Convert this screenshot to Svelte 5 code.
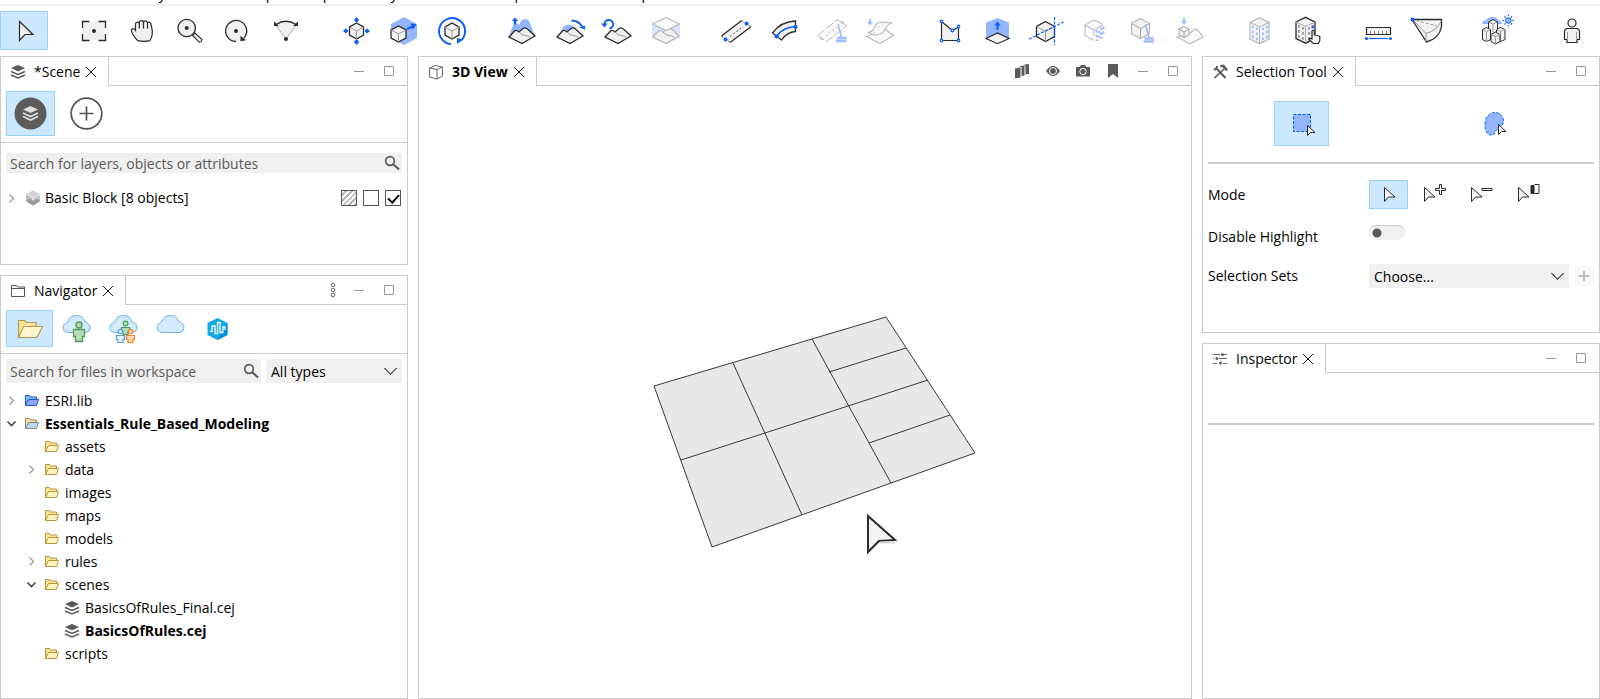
<script lang="ts">
	type Tool = { name: string; icon: string; disabled?: boolean };

	const INK = '#2b2b2b';
	const BLUE = '#0a5cff';
	const SKY = '#93b6ff';

	// isometric cube around a centre, w and h are half sizes
	function cube(x: number, y: number, w: number, h: number, stroke = INK) {
		const q = h / 2;
		return `<path d="M${x} ${y - h}l${w} ${q}v${h}l${-w} ${q}l${-w} ${-q}v${-h}z" fill="#f2f2f2" stroke="${stroke}" stroke-width="1.3"/>
			<path d="M${x - w} ${y - q}l${w} ${q}l${w} ${-q}M${x} ${y}v${h}" fill="none" stroke="#999"/>`;
	}

	function terrain(stroke = INK) {
		return `<path d="M3 22l5.500-6q1.500-1.500 4.500 1l4-3.500q2.500-1.500 5 1l7 6.500-13 7.500z" fill="#f0f0f0" stroke="${stroke}" stroke-width="1.3"/>
			<path d="M13 17q3 3.500 6 3.500t5.500 2" fill="none" stroke="#999"/>`;
	}

	function broom(x: number, y: number) {
		return `<path d="M${x} ${y}l3.500 13" stroke="${SKY}" stroke-width="1.600"/><path d="M${x - 1} ${y + 14}h9.500M${x - 2} ${y + 17}h10.500" stroke="${SKY}" stroke-width="2.600"/>`;
	}

	function windows(x: number, y: number, fill: string) {
		let out = '';
		for (let row = 0; row < 3; row++) {
			for (const [dx, dy] of [[2, 2], [6, 4], [12, 4], [16, 2]]) {
				out += `<path d="M${x + dx} ${y + dy + row * 5}h1.800v2.800h-1.800z" fill="${fill}"/>`;
			}
		}
		return out;
	}

	function building(x: number, y: number, stroke: string, fill: string) {
		return `<path d="M${x} ${y}l9.500-4.700 9.500 4.700v16.500l-9.500 4.700-9.500-4.700z" fill="#f2f2f2" stroke="${stroke}" stroke-width="1.3"/>
			<path d="M${x} ${y}l9.500 4.300 9.500-4.300M${x + 9.5} ${y + 4.3}v16" fill="none" stroke="#aaa"/>${windows(x, y + 1, fill)}`;
	}

	const arrow = `fill="#f2f2f2" stroke="${INK}" stroke-width="1.2"`;

	const toolGroups: Tool[][] = [
		[
			{ name: 'Select', icon: `<path d="M11.500 6.500v19l5.500-6h8z" ${arrow}/>` }
		],
		[
			{
				name: 'Frame',
				icon: `<path d="M5 7h22v18H5z" fill="#f0f0f0"/><path d="M4.500 13V6.500h7M20.500 6.500h7V13M27.500 19v6.500h-7M11.500 25.500h-7V19" fill="none" stroke="${INK}" stroke-width="1.3"/><circle cx="16" cy="16" r="2" fill="${INK}"/>`
			},
			{
				name: 'Pan',
				icon: `<path d="M9.500 15.500V8.500q1.800-2.500 3.800-.5v-1q2-2.500 4.200-.500q2.300-1.500 4 1q2-1 3.300 1l1 4.500q.900 3 .400 6.500-.700 4.500-2.500 6.200-6 1.300-11.700 0-2.500-1.700-5-6.200-2.500-4-1-5.500 1.500-1 3.500 1.500z" fill="#f0f0f0" stroke="${INK}" stroke-width="1.2"/><path d="M13.300 8v5.500M17.500 7v6.500M21.500 8v5.500" stroke="${INK}" stroke-width="1.2"/>`
			},
			{
				name: 'Zoom',
				icon: `<path d="M18.500 20.500l2.500-2.500 7 6.500q-.500 2.500-2.500 2.800z" fill="#f0f0f0" stroke="${INK}" stroke-width="1.1"/><circle cx="12.700" cy="13" r="8.700" fill="#f0f0f0" stroke="${INK}" stroke-width="1.3"/><circle cx="12.700" cy="13" r="2" fill="${INK}"/>`
			},
			{
				name: 'Orbit',
				icon: `<circle cx="14" cy="16" r="10" fill="#f0f0f0"/><path d="M14 26.500A10.500 10.500 0 1 1 22 23" fill="none" stroke="${INK}" stroke-width="1.3"/><path d="M18.500 26.300v-5.500l5.500 4.500z" fill="${INK}"/><circle cx="14" cy="16" r="2" fill="${INK}"/>`
			},
			{
				name: 'Look around',
				icon: `<path d="M16 24L5.500 10q10.500-6.500 21 0z" fill="#f0f0f0"/><path d="M16 24L5.500 10M16 24l10.500-14" stroke="#aaa"/><path d="M6 9.500q10-6.500 20 0" fill="none" stroke="${INK}" stroke-width="1.3"/><path d="M4 6.500v4.500h5zM28 6.500v4.500h-5z" fill="${INK}"/><circle cx="16" cy="24" r="2" fill="${INK}"/>`
			}
		],
		[
			{
				name: 'Move',
				icon: `${cube(16.5, 16, 7, 8)}<path d="M16.500 2l3 3.500h-1.700v1.500h-2.600V5.500h-1.700zM16.500 30l3-3.500h-1.700V25h-2.600v1.500h-1.700zM3 16l3.500-3v1.700H8v2.600H6.500V19zM30 16l-3.500-3v1.700H25v2.600h1.500V19z" fill="${BLUE}"/>`
			},
			{
				name: 'Scale',
				icon: `<path d="M3 9l13-7 13 7v14l-13 7-13-7z" fill="${SKY}"/>${cube(10.500, 19, 7.500, 8)}<path d="M19 14l6-2.500" stroke="${BLUE}" stroke-width="2"/><path d="M22.500 8.500l6 .500-3.500 5.500z" fill="${BLUE}"/>`
			},
			{
				name: 'Rotate',
				icon: `<path d="M15 29A13 13 0 1 1 25 25.500" fill="none" stroke="${BLUE}" stroke-width="1.900"/><path d="M21 23v6l6-4.500z" fill="${BLUE}"/>${cube(16, 16, 7, 8)}`
			}
		],
		[
			{
				name: 'Raise terrain',
				icon: `<path d="M3 22l4-12q3-3 6 0 2-6 6-6 3.500 0 5 4l5 13z" fill="${SKY}"/>${terrain()}<path d="M9 2.500l3 3.500h-1.800v3.500H7.800V6H6z" fill="${BLUE}"/>`
			},
			{
				name: 'Smooth terrain',
				icon: `<path d="M5 20l4-8q6-4.500 12 0l4 7z" fill="${SKY}"/>${terrain()}<path d="M17.500 5.500q7 0 10.500 6" fill="none" stroke="${BLUE}" stroke-width="1.900"/><path d="M25 12.500l6-2v4z" fill="${BLUE}"/>`
			},
			{
				name: 'Reset terrain',
				icon: `${terrain()}<path d="M2.500 9.500a4.300 4.300 0 1 1 5 4" fill="none" stroke="${BLUE}" stroke-width="1.900"/><path d="M-1 8.500h6.500l-3 4z" fill="${BLUE}"/>`
			},
			{
				name: 'Align terrain',
				disabled: true,
				icon: `<path d="M2 8h28v15l-14 6-14-6z" fill="#d3e1ff"/>${terrain('#b5b5b5')}<path d="M16 2.500L29.500 9 16 15.500 2.500 9z" fill="#fafafa" stroke="#b5b5b5" stroke-width="1.2"/>`
			}
		],
		[
			{
				name: 'Polygonal street',
				icon: `<path d="M1.500 21L21.700 5.500l9.300 6.200L10 27.500z" fill="#f2f2f2"/><path d="M1.500 21L21.700 5.500M10 27.500L31 11.700" stroke="${INK}" stroke-width="1.3"/><path d="M1.500 21l8.500 6.500M21.700 5.500l9.300 6.200M10 21.500L23 11.500" stroke="#555" stroke-dasharray="2 2"/><circle cx="26.500" cy="8.500" r="2" fill="${BLUE}"/><circle cx="5.500" cy="24.500" r="2" fill="${BLUE}"/>`
			},
			{
				name: 'Freehand street',
				icon: `<path d="M4.500 18Q13 6.500 27.500 6v10.500Q19 17 13.500 25z" fill="#f2f2f2" stroke="${INK}" stroke-width="1.3"/><path d="M8.500 21.500Q15 12 27.500 11.800" fill="none" stroke="${BLUE}" stroke-width="1.600"/><circle cx="8.500" cy="21.500" r="2" fill="${BLUE}"/><circle cx="27.500" cy="11.800" r="2" fill="${BLUE}"/>`
			},
			{
				name: 'Clean up streets',
				disabled: true,
				icon: `<path d="M1.500 20.500L21.500 4.500l9.500 6.500L10.500 26.500z" fill="#fafafa" stroke="#b5b5b5" stroke-dasharray="9 2"/><path d="M10 20.500L22 11" stroke="#bbb" stroke-dasharray="2 2"/><circle cx="5.500" cy="23.500" r="1.800" fill="#ccc"/><circle cx="26.500" cy="7.500" r="1.800" fill="#ccc"/>${broom(22, 9)}`
			},
			{
				name: 'Align streets',
				disabled: true,
				icon: `<path d="M2.500 21.500l13.500 7 13.500-8-8-6z" fill="#fafafa" stroke="#b5b5b5" stroke-width="1.2"/><path d="M3.500 17.500q6 0 8.500-8 4-4 15.500-1.500-5 2-7 7-3 5-10 5z" fill="#fafafa" stroke="#b5b5b5" stroke-width="1.2"/><path d="M9 17.500q4-1 6-5 1.500-3 6-4" fill="none" stroke="#bbb" stroke-dasharray="2 2"/><path d="M6 10.500L9 7H7V4H5v3H3z" fill="${SKY}"/>`
			}
		],
		[
			{
				name: 'Polygonal shape',
				icon: `<path d="M7.500 6.500l11 9 6-3.500v13.500h-17z" fill="#f0f0f0" stroke="${INK}" stroke-width="1.2"/>${[[7.5, 6.5], [18.5, 15.5], [24.5, 11.5], [24.5, 25.5], [7.5, 25.5]]
					.map(([x, y]) => `<circle cx="${x}" cy="${y}" r="1.300" fill="#fff" stroke="${BLUE}" stroke-width="1.2"/>`)
					.join('')}`
			},
			{
				name: 'Push pull',
				icon: `<path d="M4 7.500L15.500 3 27 7.500v16H4z" fill="${SKY}"/><path d="M4 23.500L15.500 18 27 23.500l-11.500 5.200z" fill="#f2f2f2" stroke="${INK}" stroke-width="1.2"/><path d="M15.500 6.500l3.200 4h-2.200V15h-2v-4.500h-2.200z" fill="${BLUE}"/>`
			},
			{
				name: 'Separate faces',
				icon: `${cube(15.500, 16.500, 9, 10)}<path d="M24.500 2v28M-1 24L33.500 7" stroke="${BLUE}" stroke-width="1.2" stroke-dasharray="3 1.500"/>`
			},
			{
				name: 'Texture shape',
				disabled: true,
				icon: `<path d="M25 9.500L16 5 7 10v10.500l9 5M7 10l9 5 9-5M16 15v6" fill="none" stroke="#b9b9b9" stroke-width="1.2"/><path d="M19 15v11M23.500 12.500v11" stroke="${SKY}" stroke-width="2.400" stroke-dasharray="2.400 2.400"/><path d="M21.300 16v8M25.500 11.500v9" stroke="${SKY}" stroke-width="2" stroke-dasharray="2.400 2.400"/>`
			},
			{
				name: 'Clean up shapes',
				disabled: true,
				icon: `${cube(14.500, 13.500, 9, 10, '#b5b5b5')}${broom(19.500, 9.500)}`
			},
			{
				name: 'Align shapes',
				disabled: true,
				icon: `<path d="M3 22l13 6.700L29 22l-5.500-7q-2.500-2-5 1L13 20.500z" fill="#fafafa" stroke="#b5b5b5" stroke-width="1.2"/>${cube(10, 17, 5, 5.500, '#b5b5b5')}<path d="M10 9.500L13 6h-2V3H9v3H7z" fill="${SKY}"/>`
			}
		],
		[
			{ name: 'Generate', disabled: true, icon: building(6, 7.5, '#b5b5b5', SKY) },
			{
				name: 'Local edits',
				icon: `${building(4, 7, INK, '#999')}<path d="M19.500 10.500h2v3h-2z" fill="${BLUE}"/><path d="M20 24v-8q1.300-1.500 2.300 0v4q4 0 5.500 1.500v4l-1.500 3h-5L17 24.500q.500-2 3-.500z" fill="#f2f2f2" stroke="${INK}" stroke-width="1.2"/>`
			}
		],
		[
			{
				name: 'Measure distance',
				icon: `<path d="M4.500 12.500h24v7h-24z" fill="#f2f2f2" stroke="${INK}" stroke-width="1.2"/><path d="M8.500 19v-3M12.500 19v-3M16.500 19v-3M20.500 19v-3M24.500 19v-3" stroke="#888"/><path d="M7 23.500h19" stroke="${BLUE}" stroke-width="1.2"/><circle cx="4.500" cy="23.500" r="1.600" fill="${BLUE}"/><circle cx="28.500" cy="23.500" r="1.600" fill="${BLUE}"/>`
			},
			{
				name: 'Measure area',
				icon: `<path d="M2 4.500h29.500v7q-2 12-15 15.500z" fill="#f2f2f2" stroke="${INK}" stroke-width="1.3"/><path d="M4 6l12 12.500q11-3 15-12M16 18.500v8" fill="none" stroke="#999"/><path d="M6 5.500l21 5.500" stroke="#999" stroke-dasharray="3 2"/><circle cx="2.500" cy="4.500" r="2" fill="${BLUE}"/>`
			}
		],
		[
			{
				name: 'Scene light',
				icon: `<path d="M2 9q0-3.500 4-4 2-3 7-3 4 0 5 3 4 1 4 4z" fill="${SKY}"/><circle cx="28.300" cy="5.500" r="2.800" fill="${SKY}" stroke="${BLUE}"/><path d="M28.300-.500V1M28.300 10v1.500M22.500 5.500H24M32.500 5.500H34M24.500 1.500l1 1M32 1.500l-1 1M24.500 9.500l1-1M32 9.500l-1-1" stroke="${BLUE}" stroke-width="1.200"/>
					<path d="M8.500 7l4.500-2.500L17.500 7v14h-9z" fill="#f2f2f2" stroke="${INK}"/><path d="M8.500 7l4.500 2 4.500-2M13 9v8" stroke="#999"/>
					<path d="M2.500 14.500l4-2 4 2v10l-4 2-4-2zM16.500 14.500l4-2 4.500 2v10l-4.500 2-4-2z" fill="#f2f2f2" stroke="${INK}"/><path d="M2.500 14.500l4 2 4-2M6.500 16.500v9M16.500 14.500l4 2 4.500-2M20.500 16.500v9" stroke="#999"/>
					<path d="M11 19.500l4.500-2.500 4.500 2.500v7L15.500 29 11 26.500z" fill="#f2f2f2" stroke="${INK}"/><path d="M11 19.500l4.500 2 4.500-2M15.500 21.500V28" stroke="#999"/>`
			}
		],
		[
			{
				name: 'First person view',
				icon: `<circle cx="16" cy="8" r="4" fill="#f2f2f2" stroke="${INK}" stroke-width="1.2"/><path d="M10.500 13.500h11l2 2v9h-2.500v3H11v-3H8.500v-9z" fill="#f2f2f2" stroke="${INK}" stroke-width="1.2"/><path d="M11.500 17v8M20.500 17v8" stroke="#999"/>`
			}
		]
	];

	const menus = ['File', 'Edit', 'Select', 'Layer', 'View', 'Graph', 'Shapes', 'Analysis', 'Search', 'Scripts', 'Window', 'Help'];

	const tree = [
		{ label: 'ESRI.lib', level: 0, icon: 'lib', state: 'closed' },
		{ label: 'Essentials_Rule_Based_Modeling', level: 0, icon: 'project', state: 'open', bold: true },
		{ label: 'assets', level: 1, icon: 'folder' },
		{ label: 'data', level: 1, icon: 'folder', state: 'closed' },
		{ label: 'images', level: 1, icon: 'folder' },
		{ label: 'maps', level: 1, icon: 'folder' },
		{ label: 'models', level: 1, icon: 'folder' },
		{ label: 'rules', level: 1, icon: 'folder', state: 'closed' },
		{ label: 'scenes', level: 1, icon: 'folder', state: 'open' },
		{ label: 'BasicsOfRules_Final.cej', level: 2, icon: 'layers' },
		{ label: 'BasicsOfRules.cej', level: 2, icon: 'layers', bold: true },
		{ label: 'scripts', level: 1, icon: 'folder' }
	];

	// back, front, outline
	const folderColors: Record<string, string[]> = {
		lib: ['#6fc4f5', '#8fa8ff', '#2a4fd0'],
		project: ['#fbe39a', '#b4d8f8', '#8a8a70'],
		folder: ['#fbe39a', '#fff3c0', '#b8963e']
	};

	const cloud = 'M5.500 18.500q-4.500-1-4.500-5t4.500-5Q7.500 1.500 14.500 1.500q6.500 0 8 6 5.500 1.500 5.500 6.500 0 3.500-4 4.500z';

	const modes = [
		{ name: 'New selection', icon: '' },
		{ name: 'Add to selection', icon: '<path d="M18.500 3.500h2v4h4v2h-4v4h-2v-4h-4v-2h4z" fill="#fff" stroke="#2b2b2b"/>' },
		{ name: 'Remove from selection', icon: '<path d="M14 7.500h10v2H14z" fill="#fff" stroke="#2b2b2b"/>' },
		{ name: 'Toggle selection', icon: '<path d="M16 4.500v8h3v-8z" fill="#2b2b2b" stroke="#2b2b2b"/><path d="M19.500 3.500H24v9h-4.500" fill="none" stroke="#2b2b2b"/>' }
	];

	let mode = $state(0);
	let shape = $state('rectangle');
	let activeTool = $state('Select');
	let source = $state('Workspace');
</script>

{#snippet layers(color: string)}
	<svg width="16" height="16" viewBox="0 0 16 16" fill="none">
		<path d="M8 1l7 3-7 3.500L1 4z" fill={color} />
		<path d="M1 7.500l7 3 7-3M1 11l7 3 7-3" stroke={color} stroke-width="1.600" />
	</svg>
{/snippet}

{#snippet folder(kind: string)}
	<svg width="16" height="16" viewBox="0 0 16 16" stroke={folderColors[kind][2]}>
		<path d="M1.500 12.500v-10h4l1 1.500h6v3" fill={folderColors[kind][0]} />
		<path d="M1.500 12.500l3-6h10l-2 6z" fill={folderColors[kind][1]} />
	</svg>
{/snippet}

{#snippet chevron(state: string)}
	<svg width="9" height="9" viewBox="0 0 9 9" fill="none">
		{#if state === 'open'}
			<path d="M0.500 2.500l4 4 4-4" stroke="#444" stroke-width="1.600" />
		{:else}
			<path d="M2.500 0.500l4 4-4 4" stroke="#a0a0a0" stroke-width="1.400" />
		{/if}
	</svg>
{/snippet}

{#snippet magnifier()}
	<svg width="16" height="16" viewBox="0 0 16 16" fill="none" stroke="#5a5a5a">
		<circle cx="6" cy="6" r="4.300" stroke-width="1.700" />
		<path d="M9 9l6 5.500" stroke-width="2.200" />
	</svg>
{/snippet}

{#snippet closeButton(label: string)}
	<button class="close" aria-label={'Close ' + label}>
		<svg width="12" height="12" viewBox="0 0 12 12" stroke="#111"><path d="M1 1l10 10M11 1L1 11" /></svg>
	</button>
{/snippet}

{#snippet windowButtons()}
	<button aria-label="Minimize">
		<svg width="16" height="16" viewBox="0 0 16 16" stroke="#999"><path d="M3 8.500h10" /></svg>
	</button>
	<button aria-label="Maximize">
		<svg width="16" height="16" viewBox="0 0 16 16" stroke="#999" fill="none"><path d="M3.500 3.500h9v9h-9z" /></svg>
	</button>
{/snippet}

<div class="app">
	<nav class="menubar">
		{#each menus as menu}
			<span>{menu}</span>
		{/each}
	</nav>

	<div class="toolbar">
		{#each toolGroups as group}
			<div class="tool-group">
				{#each group as tool}
					<button
						class="tool"
						class:active={activeTool === tool.name}
						class:faded={tool.disabled}
						disabled={tool.disabled}
						aria-label={tool.name}
						onclick={() => (activeTool = tool.name)}
					>
						<svg width="32" height="31" viewBox="0 0 32 31" fill="none">{@html tool.icon}</svg>
					</button>
				{/each}
			</div>
		{/each}
	</div>

	<main class="workbench">
		<div class="column">
			<section class="panel scene">
				<header class="panel-header">
					<div class="tab">
						{@render layers('#5a5a5a')}
						<span>*Scene</span>
						{@render closeButton('Scene')}
					</div>
					<div class="header-tools">{@render windowButtons()}</div>
				</header>

				<div class="scene-actions">
					<button class="scene-button active" aria-label="Layers">
						<svg width="33" height="33" viewBox="0 0 33 33" fill="none">
							<circle cx="16.500" cy="16.500" r="16" fill="#5c5c5c" />
							<path d="M16.500 9l7.500 3.500-7.500 3.500L9 12.500z" fill="#e0e0e0" />
							<path d="M9 16l7.500 3.500L24 16M9 19.500l7.500 3.500 7.500-3.500" stroke="#e0e0e0" stroke-width="1.600" />
						</svg>
					</button>
					<button class="scene-button" aria-label="Add layer">
						<svg width="33" height="33" viewBox="0 0 33 33" fill="none" stroke="#555" stroke-width="1.700">
							<circle cx="16.500" cy="16.500" r="15.300" />
							<path d="M9.500 16.500h14M16.500 9.500v14" />
						</svg>
					</button>
				</div>

				<div class="scene-body">
					<div class="search">
						<input type="text" placeholder="Search for layers, objects or attributes" aria-label="Search layers" />
						{@render magnifier()}
					</div>
					<div class="layer-row">
						<span class="twisty">{@render chevron('closed')}</span>
						<svg width="16" height="16" viewBox="0 0 16 16">
							<path d="M8 0.500l7 3.500-7 3.500L1 4z" fill="#d4d4d4" />
							<path d="M1 4.500l6.500 3.500v7L1 11.500z" fill="#bcbcbc" />
							<path d="M15 4.500L8.500 8v7l6.500-3.500z" fill="#cacaca" />
							<path d="M1.500 10l3.500-1 3 2 3-2 3.500 1v1.500L8 15.500l-6.500-4z" fill="#999" />
						</svg>
						<span class="layer-name">Basic Block [8 objects]</span>
						<input type="checkbox" class="hatched" aria-label="Wireframe" />
						<input type="checkbox" aria-label="Lock layer" />
						<input type="checkbox" checked aria-label="Show layer" />
					</div>
				</div>
			</section>

			<section class="panel navigator">
				<header class="panel-header">
					<div class="tab">
						<svg width="16" height="16" viewBox="0 0 16 16" fill="none" stroke="#555">
							<path d="M1.500 13.500v-11h5l1 1.500h7v9.500zM1.500 5.500h13" />
						</svg>
						<span>Navigator</span>
						{@render closeButton('Navigator')}
					</div>
					<div class="header-tools">
						<button aria-label="View menu">
							<svg width="8" height="16" viewBox="0 0 8 16" fill="none" stroke="#666">
								<circle cx="4" cy="3" r="1.800" /><circle cx="4" cy="8" r="1.800" /><circle cx="4" cy="13" r="1.800" />
							</svg>
						</button>
						{@render windowButtons()}
					</div>
				</header>

				<div class="sources">
					<button class:active={source === 'Workspace'} aria-label="Workspace" onclick={() => (source = 'Workspace')}>
						<svg width="30" height="30" viewBox="0 0 30 30" stroke="#b39a4c" stroke-width="1.200">
							<path d="M3.500 23.500v-17h6l2 2h9.500v4" fill="#fbe39a" />
							<path d="M3.500 23.500l5-11h19l-5.500 11z" fill="#fff6cf" />
						</svg>
					</button>
					<button class:active={source === 'My content'} aria-label="My content" onclick={() => (source = 'My content')}>
						<svg width="30" height="30" viewBox="0 0 30 30">
							<path d={cloud} fill="#d2eafb" stroke="#6fb1e0" />
							<g fill="#b9dcb5" stroke="#4f9a5a" stroke-width="1.300">
								<circle cx="17" cy="11" r="3" />
								<path d="M11.500 15.500h11v7h-2v5h-7v-5h-2z" />
							</g>
						</svg>
					</button>
					<button class:active={source === 'Groups'} aria-label="Groups" onclick={() => (source = 'Groups')}>
						<svg width="30" height="30" viewBox="0 0 30 30">
							<path d={cloud} fill="#d2eafb" stroke="#6fb1e0" />
							<g stroke-width="1.200">
								<g fill="#b9dcb5" stroke="#4f9a5a">
									<circle cx="16.500" cy="9.500" r="2.300" /><path d="M12.500 13.500h8v4h-1.500v3h-5v-3h-1.500z" />
								</g>
								<g fill="#e4f3ff" stroke="#5b9fd8">
									<circle cx="11.500" cy="17.500" r="2.200" /><path d="M7.500 21.500h8v4H14v3H9v-3H7.500z" />
								</g>
								<g fill="#ffd9a8" stroke="#f0862f">
									<circle cx="21.500" cy="17.500" r="2.200" /><path d="M17.500 21.500h8v4H24v3h-5v-3h-1.500z" />
								</g>
							</g>
						</svg>
					</button>
					<button class:active={source === 'Online'} aria-label="Online" onclick={() => (source = 'Online')}>
						<svg width="30" height="30" viewBox="0 0 30 30"><path d={cloud} fill="#d2eafb" stroke="#6fb1e0" /></svg>
					</button>
					<button class:active={source === 'Urban'} aria-label="Urban" onclick={() => (source = 'Urban')}>
						<svg width="30" height="30" viewBox="0 0 30 30">
							<path d="M14.500 4l10 5v12l-10 5-10-5V9z" fill="#11a9ea" />
							<path d="M14.500 26l10-5V9z" fill="#0a8fd6" />
							<path d="M7 17.500h2V12h3v7.500h2.500V8.500H17v10h3v-5.500h2v3" fill="none" stroke="#fff" stroke-width="1.300" />
						</svg>
					</button>
				</div>

				<div class="filters">
					<div class="search">
						<input type="text" placeholder="Search for files in workspace" aria-label="Search files" />
						{@render magnifier()}
					</div>
					<div class="select types">
						<select aria-label="File type">
							<option>All types</option>
						</select>
					</div>
				</div>

				<ul class="tree">
					{#each tree as item}
						<li class="level-{item.level}" class:bold={item.bold}>
							<span class="twisty">
								{#if item.state}{@render chevron(item.state)}{/if}
							</span>
							{#if item.icon === 'layers'}
								{@render layers('#5a5a5a')}
							{:else}
								{@render folder(item.icon)}
							{/if}
							<span>{item.label}</span>
						</li>
					{/each}
				</ul>
			</section>
		</div>

		<section class="panel viewport">
			<header class="panel-header">
				<div class="tab bold">
					<svg width="16" height="16" viewBox="0 0 16 16" fill="none" stroke="#666">
						<path d="M1.500 4L7 1.500l7.500 1.500v9L9 15l-7.500-2zM1.500 4L9 5.500l5.500-2.500M9 5.500V15" />
					</svg>
					<span>3D View</span>
					{@render closeButton('3D View')}
				</div>
				<div class="header-tools">
					<button aria-label="View settings">
						<svg width="16" height="16" viewBox="0 0 16 16" fill="#5a5a5a">
							<path d="M0 5.500L5.500 4.500v10L0 15.500zM5 3l4.500-.500v10L6.500 13V4H5zM9.500 1.500l4.500-.500v10l-3.500.500v-9h-1z" />
						</svg>
					</button>
					<button aria-label="Visibility">
						<svg width="16" height="16" viewBox="0 0 16 16">
							<path d="M1 8q7-10 14 0-7 10-14 0z" fill="#5a5a5a" />
							<circle cx="8" cy="8" r="3.500" fill="none" stroke="#fff" />
						</svg>
					</button>
					<button aria-label="Snapshot">
						<svg width="16" height="16" viewBox="0 0 16 16">
							<path d="M1 4h3.500L6 2h4l1.500 2H15v9.500H1z" fill="#5a5a5a" />
							<circle cx="8" cy="8.500" r="3.200" fill="none" stroke="#fff" />
						</svg>
					</button>
					<button aria-label="Bookmarks">
						<svg width="16" height="16" viewBox="0 0 16 16" fill="#5a5a5a"><path d="M3 1h10v14l-5-4-5 4z" /></svg>
					</button>
					{@render windowButtons()}
				</div>
			</header>

			<svg class="canvas" viewBox="419 86 772 612" fill="none">
				<path d="M654 386L886 317l89 136-263 94z" fill="#e8e8e8" stroke="#3a3a3a" />
				<path
					d="M733 363L802 515M812 339L891 483M681 460L765 433L848 406L928 380M829 372L906 348M869 443L950 415"
					stroke="#3a3a3a"
				/>
				<path d="M868 516v36l11-11 16-1z" fill="#f4f4f4" stroke="#2b2b2b" stroke-width="2" />
				<path d="M880 542.500h15" stroke="#d8d8d8" stroke-width="2" />
			</svg>
		</section>

		<div class="column">
			<section class="panel selection">
				<header class="panel-header">
					<div class="tab">
						<svg width="16" height="16" viewBox="0 0 16 16" fill="none" stroke="#5a5a5a">
							<path d="M4 4l9.500 10" stroke-width="2" />
							<path d="M1.500 5.500Q4.500 6 5 2" stroke-width="2" />
							<path d="M12.500 4.500l-10 9.500" stroke-width="1.700" />
							<path d="M8.500 2h3l3.500 4.500" stroke-width="2.400" />
						</svg>
						<span>Selection Tool</span>
						{@render closeButton('Selection Tool')}
					</div>
					<div class="header-tools">{@render windowButtons()}</div>
				</header>

				<div class="shape-picker">
					<button class:active={shape === 'rectangle'} aria-label="Rectangle selection" onclick={() => (shape = 'rectangle')}>
						<svg width="28" height="28" viewBox="0 0 28 28">
							<path d="M6.500 4.500h17v17h-17z" fill={SKY} stroke={BLUE} stroke-dasharray="3 1.500" />
							<path d="M20.500 15.500v10l3-3H28z" fill="#f2f2f2" stroke="#2b2b2b" />
						</svg>
					</button>
					<button class:active={shape === 'lasso'} aria-label="Lasso selection" onclick={() => (shape = 'lasso')}>
						<svg width="28" height="28" viewBox="0 0 28 28">
							<path d="M5 14Q6 3 15 2.500q7 0 8.500 7.500 0 6-5 8-3.500 2-4 6-5 3-8-2Q4.500 18 5 14z" fill={SKY} stroke={BLUE} stroke-dasharray="3 1.500" />
							<path d="M18.500 14.500v10l3-3h4.500z" fill="#f2f2f2" stroke="#2b2b2b" />
						</svg>
					</button>
				</div>
				<hr />

				<div class="options">
					<span class="label">Mode</span>
					<div class="modes">
						{#each modes as item, i}
							<button class:active={mode === i} aria-label={item.name} onclick={() => (mode = i)}>
								<svg width="29" height="27" viewBox="0 0 29 27">
									<path d="M{i ? 3.5 : 10.5} 6.500v14l4-4.500h6.500z" fill="#f2f2f2" stroke={INK} />
									{@html item.icon}
								</svg>
							</button>
						{/each}
					</div>

					<label class="label" for="highlight">Disable Highlight</label>
					<input type="checkbox" class="toggle" id="highlight" />

					<label class="label" for="sets">Selection Sets</label>
					<div class="sets">
						<div class="select">
							<select id="sets">
								<option>Choose...</option>
							</select>
						</div>
						<button class="add" disabled aria-label="Add selection set">
							<svg width="12" height="12" viewBox="0 0 12 12" stroke="#bdbdbd" stroke-width="2"><path d="M1 6h10M6 1v10" /></svg>
						</button>
					</div>
				</div>
			</section>

			<section class="panel inspector">
				<header class="panel-header">
					<div class="tab">
						<svg width="16" height="16" viewBox="0 0 16 16" stroke="#666">
							<path d="M1 3.500h7M12 3.500h3M1 7.500h1M7 7.500h8M1 12.500h4M11 12.500h4" />
							<g fill="#666" stroke="none">
								<circle cx="10.500" cy="3.500" r="1.600" /><circle cx="5" cy="7.500" r="1.600" /><circle cx="8.500" cy="12" r="1.600" />
							</g>
						</svg>
						<span>Inspector</span>
						{@render closeButton('Inspector')}
					</div>
					<div class="header-tools">{@render windowButtons()}</div>
				</header>
				<hr />
			</section>
		</div>
	</main>
</div>

<style>
	:global(body) {
		margin: 0;
		background: #fff;
	}

	.app {
		display: flex;
		flex-direction: column;
		min-height: 100vh;
		font-family: 'Open Sans', 'Noto Sans', sans-serif;
		font-size: 14px;
		line-height: 20px;
		color: #000;
	}

	.app * {
		box-sizing: border-box;
	}

	svg {
		display: block;
		flex-shrink: 0;
		overflow: visible;
	}

	button {
		display: flex;
		align-items: center;
		justify-content: center;
		padding: 0;
		border: 1px solid transparent;
		background: none;
	}

	button.active {
		background: #cce8ff;
		border-color: #99d1ff;
	}

	input,
	select {
		margin: 0;
		font: inherit;
		color: inherit;
	}

	hr {
		width: auto;
		height: 2px;
		margin: 0 5px;
		border: none;
		background: #ccc;
	}

	.bold {
		font-weight: 700;
	}

	/* Menu and toolbar */
	.menubar {
		display: flex;
		align-items: flex-end;
		gap: 16px;
		height: 6px;
		padding-left: 10px;
		overflow: hidden;
		border-bottom: 2px solid #f0f0f0;
	}

	.toolbar {
		display: flex;
		gap: 22px;
		padding: 5px 4px 6px 0;
	}

	.tool-group {
		display: flex;
	}

	.tool-group:last-child {
		margin-left: auto;
	}

	.tool {
		width: 48px;
		height: 39px;
	}

	.faded svg {
		opacity: 0.9;
	}

	/* Panels */
	.workbench {
		flex: 1;
		display: grid;
		grid-template-columns: 408fr 774fr 398fr;
		gap: 10px;
	}

	.column {
		display: flex;
		flex-direction: column;
		gap: 10px;
		min-width: 0;
	}

	.panel {
		display: flex;
		flex-direction: column;
		min-width: 0;
		border: 1px solid #ccc;
	}

	.scene {
		flex: 209 0 0;
	}

	.navigator {
		flex: 426 0 0;
	}

	.selection {
		flex: 277 0 0;
	}

	.inspector {
		flex: 356 0 0;
	}

	.panel-header {
		display: flex;
		height: 29px;
	}

	.tab {
		display: flex;
		align-items: center;
		gap: 8px;
		padding: 0 11px 0 9px;
		border-right: 1px solid #ccc;
		white-space: nowrap;
	}

	.close {
		margin-left: -3px;
		border: none;
	}

	.header-tools {
		flex: 1;
		display: flex;
		align-items: center;
		justify-content: flex-end;
		gap: 14px;
		padding-right: 10px;
		border-bottom: 1px solid #ccc;
	}

	.header-tools button {
		border: none;
	}

	/* Inputs */
	.search {
		flex: 1;
		display: flex;
		align-items: center;
		min-width: 0;
		padding: 0 2px 0 4px;
		background: #f0f0f0;
	}

	.search input {
		flex: 1;
		min-width: 0;
		height: 20px;
		padding: 2px 0 0;
		border: none;
		outline: none;
		background: none;
	}

	.search input::placeholder {
		color: #5a5a5a;
		opacity: 1;
	}

	.select {
		position: relative;
		flex: 1;
		background: #f0f0f0;
	}

	.select::after {
		content: '';
		position: absolute;
		top: 5px;
		right: 7px;
		width: 8px;
		height: 8px;
		border-right: 1px solid #222;
		border-bottom: 1px solid #222;
		transform: rotate(45deg);
		pointer-events: none;
	}

	select {
		display: block;
		width: 100%;
		height: 24px;
		padding: 1px 5px 0;
		border: none;
		background: none;
		appearance: none;
	}

	input[type='checkbox'] {
		appearance: none;
		flex-shrink: 0;
		width: 16px;
		height: 16px;
		border: 1px solid #555;
	}

	input[type='checkbox']:checked::before {
		content: '';
		display: block;
		width: 5px;
		height: 9px;
		margin: 1px auto;
		border-right: 2px solid #000;
		border-bottom: 2px solid #000;
		transform: rotate(42deg);
	}

	input.hatched {
		background: repeating-linear-gradient(135deg, #fff 0 2px, #b5b5b5 2px 4px);
	}

	/* Scene */
	.scene-actions {
		display: flex;
		gap: 7px;
		padding: 5px 5px 6px;
		border-bottom: 1px solid #ccc;
	}

	.scene-button {
		width: 49px;
		height: 45px;
	}

	.scene-body {
		padding: 10px 5px;
	}

	.layer-row {
		display: flex;
		align-items: center;
		gap: 6px;
		margin-top: 15px;
		padding-right: 1px;
	}

	.layer-name {
		flex: 1;
		margin-left: -2px;
	}

	.twisty {
		display: flex;
		width: 13px;
		padding-left: 1px;
	}

	/* Navigator */
	.sources {
		display: flex;
		padding: 5px 5px 6px;
		border-bottom: 1px solid #ccc;
	}

	.sources button {
		width: 47px;
		height: 37px;
	}

	.filters {
		display: flex;
		gap: 5px;
		padding: 5px 5px 6px;
	}

	.types {
		flex: 0 0 136px;
	}

	.tree {
		margin: 0;
		padding: 0 5px;
		list-style: none;
	}

	.tree li {
		display: flex;
		align-items: center;
		gap: 5px;
		height: 23px;
	}

	.level-1 {
		margin-left: 20px;
	}

	.level-2 {
		margin-left: 40px;
	}

	/* 3D view */
	.canvas {
		flex: 1;
		width: 100%;
		min-height: 0;
	}

	/* Selection tool */
	.shape-picker {
		display: flex;
		justify-content: space-around;
		padding: 15px 9px 16px 2px;
	}

	.shape-picker button {
		width: 55px;
		height: 45px;
	}

	.options {
		display: grid;
		grid-template-columns: 161px 1fr;
		row-gap: 16px;
		align-items: center;
		padding: 16px 5px;
	}

	.modes {
		display: flex;
		gap: 8px;
	}

	.modes button {
		width: 39px;
		height: 29px;
	}

	input.toggle {
		width: 36px;
		height: 15px;
		margin-bottom: 8px;
		border: none;
		border-top: 1px solid #ccc;
		border-radius: 8px;
		background: #f0f0f0 radial-gradient(circle at 8px 7px, #5a5a5a 4px, transparent 5px);
	}

	.sets {
		display: flex;
		align-items: center;
		gap: 5px;
	}

	.add {
		width: 20px;
		height: 20px;
		background: #f7f7f7;
	}

	/* Inspector */
	.inspector hr {
		margin-top: 50px;
	}
</style>
